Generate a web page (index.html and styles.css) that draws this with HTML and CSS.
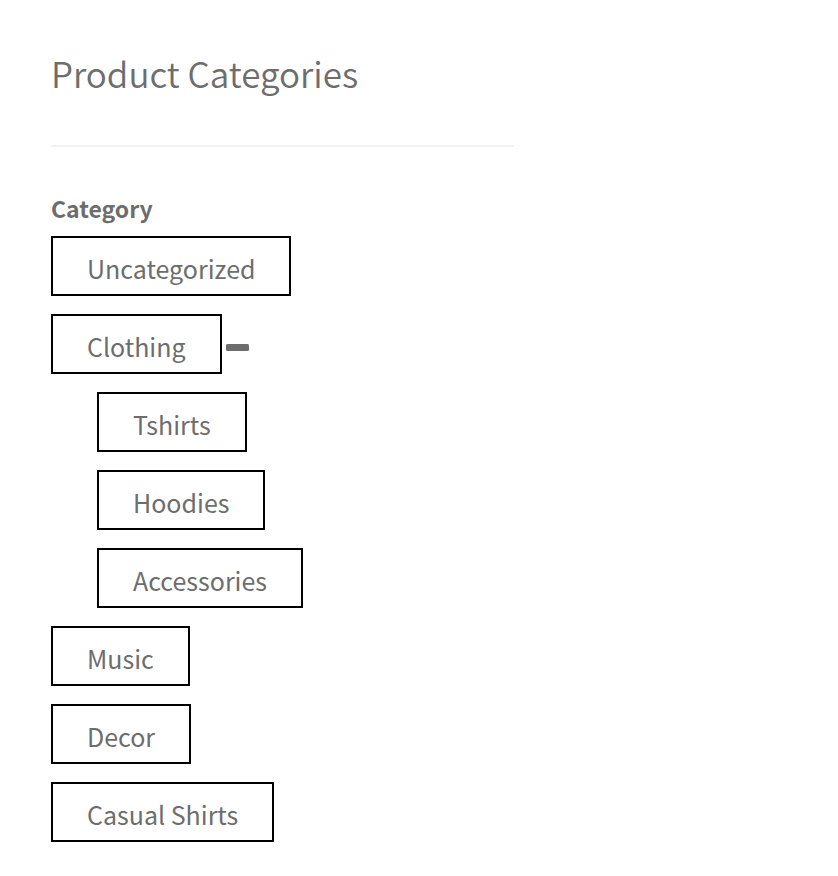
FILE: index.html
```html
<!DOCTYPE html>
<html lang="en">
<head>
<meta charset="utf-8">
<title>Product Categories</title>
<link rel="stylesheet" href="styles.css">
</head>
<body>
<aside class="widget">
  <h2 class="widget-title">Product Categories</h2>
  <h3 class="filter-title">Category</h3>
  <ul class="terms">
    <li><button type="button" class="term">Uncategorized</button></li>
    <li>
      <div class="row">
        <button type="button" class="term">Clothing</button>
        <button type="button" class="toggle" aria-label="Collapse Clothing" aria-expanded="true">
          <svg width="24" height="8" viewBox="0 0 24 8" aria-hidden="true"><rect x="0" y="0" width="23" height="7" rx="1.5" fill="currentColor"/></svg>
        </button>
      </div>
      <ul class="terms children">
        <li><button type="button" class="term">Tshirts</button></li>
        <li><button type="button" class="term">Hoodies</button></li>
        <li><button type="button" class="term">Accessories</button></li>
      </ul>
    </li>
    <li><button type="button" class="term">Music</button></li>
    <li><button type="button" class="term">Decor</button></li>
    <li><button type="button" class="term">Casual Shirts</button></li>
  </ul>
</aside>
</body>
</html>
```
FILE: styles.css
```css
* { box-sizing: border-box; }
body {
  margin: 0;
  padding: 50px 51px 34px;
  background: #fff;
  color: #6d6d6d;
  font-family: "Noto Sans CJK SC", "Source Sans Pro", sans-serif;
}
.widget { max-width: 463px; }
.widget-title {
  margin: 0 0 44px;
  padding-bottom: 49px;
  border-bottom: 2px solid #f2f2f2;
  font-size: 35px;
  line-height: 46px;
  font-weight: 350;
}
.filter-title {
  margin: 0 0 10px;
  font-size: 23px;
  line-height: 35px;
  font-weight: 700;
}
.terms {
  display: flex;
  flex-direction: column;
  gap: 18px;
  margin: 0;
  padding: 0;
  list-style: none;
}
.children {
  margin-top: 18px;
  padding-left: 46px;
}
.row {
  display: flex;
  align-items: center;
  gap: 4px;
}
.term {
  display: block;
  height: 60px;
  padding: 4px 34px 0;
  border: 2px solid #000;
  background: #fff;
  color: inherit;
  font: 400 25px/40px "Noto Sans CJK SC", "Source Sans Pro", sans-serif;
}
.toggle {
  display: flex;
  padding: 8px 0 0;
  border: 0;
  background: none;
  color: inherit;
}
```
